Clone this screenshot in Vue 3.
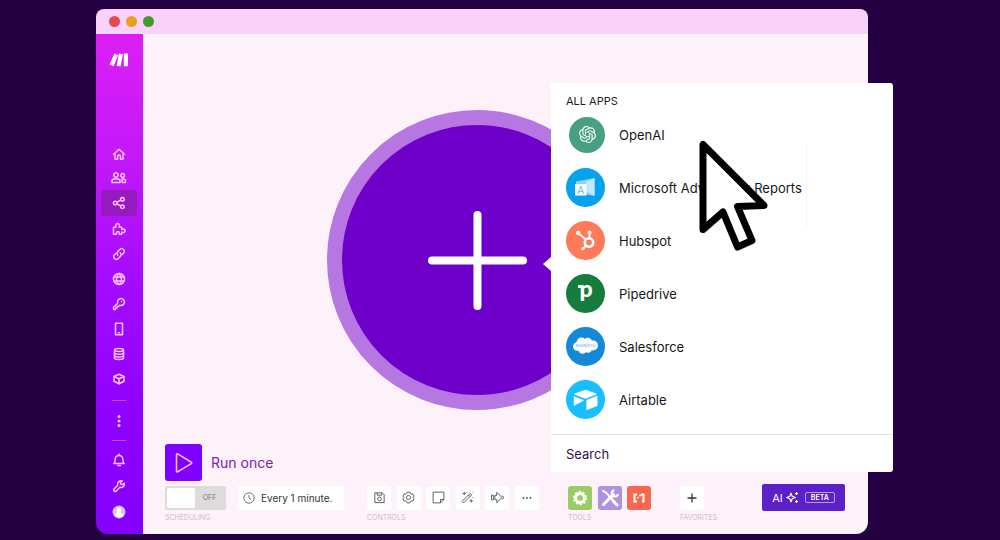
<script setup>
import { ref } from 'vue'

const navItems = [
  { name: 'Home', size: 'short', paths: ['M1.5 7.2 7 2.2l5.5 5', 'M3 6.2v6h2.6V9.3a1.4 1.4 0 0 1 2.8 0v2.9H11v-6'] },
  { name: 'Team', size: 'short', wide: true, paths: ['M5 1.8a2.2 2.2 0 1 1 0 4.4 2.2 2.2 0 0 1 0-4.4', 'M1 11.5V10a2 2 0 0 1 2-2h4a2 2 0 0 1 2 2v1.5Z', 'M11.6 2.6a1.8 1.8 0 1 1 0 3.6 1.8 1.8 0 0 1 0-3.6', 'M11 8h1.500a2 2 0 0 1 2 2v1.5h-3.2Z'] },
  { name: 'Scenarios', size: 'active', paths: ['M3.2 5.2a1.8 1.8 0 1 1 0 3.6 1.8 1.8 0 0 1 0-3.6', 'M10.4 1.4a1.8 1.8 0 1 1 0 3.6 1.8 1.8 0 0 1 0-3.6', 'M10.4 9a1.8 1.8 0 1 1 0 3.6 1.8 1.8 0 0 1 0-3.6', 'M5 6.2 8.7 4.2M5 7.9l3.7 2'] },
  { name: 'Templates', paths: ['M1.5 12.3V5.2h2.6c-1-2.4.2-3.7 1.5-3.7s2.5 1.3 1.5 3.7h2.6v2.3c2-.9 3.4-.1 3.4 1.3s-1.4 2.2-3.4 1.3v2.2H7.3v-1.4a1.4 1.4 0 0 0-2.8 0v1.4Z'] },
  { name: 'Connections', paths: ['M5.8 8.2a2.6 2.6 0 0 1 0-3.7l2-2a2.6 2.6 0 0 1 3.7 3.7L10 7.7', 'M8.2 5.8a2.6 2.6 0 0 1 0 3.7l-2 2a2.6 2.6 0 0 1-3.7-3.7L4 6.3'] },
  { name: 'Webhooks', paths: ['M7 1.5a5.5 5.5 0 1 1 0 11 5.5 5.5 0 0 1 0-11', 'M7 1.5c-3.3 3-3.3 8 0 11 3.3-3 3.3-8 0-11', 'M2 5h10M2 9h10'] },
  { name: 'Keys', paths: ['M9 1.5a3.5 3.5 0 1 1-1.2 6.8L6.3 9.6H5v1.5H3.6v1.4H1.5v-2.2l4.2-4.1A3.5 3.5 0 0 1 9 1.5Z', 'M9.5 4.5h.1'] },
  { name: 'Devices', paths: ['M3.5 1.2h7v11.6h-7Z', 'M6.3 10.8h1.4'] },
  { name: 'Data stores', paths: ['M2.5 3c0-2 9-2 9 0s-9 2-9 0v8c0 2 9 2 9 0V3', 'M2.5 5.7c0 2 9 2 9 0M2.5 8.4c0 2 9 2 9 0'] },
  { name: 'Data structures', paths: ['M7 2.3 12 4.500v4.800l-5 2.400-5-2.400V4.500Z', 'M2 4.500l5 2.200 5-2.200M7 6.700v5'] }
]

const lowerItems = [
  { name: 'Notifications', paths: ['M1.8 10.5c1.3-1 1.4-2.3 1.4-4.2a3.8 3.8 0 0 1 7.6 0c0 1.9.1 3.2 1.4 4.2Z', 'M5.7 12.6h2.6M7 1v1.2'] },
  { name: 'Settings', paths: ['M12.3 4.2 10.2 5.6 8.6 5l-.2-1.7L10.3 2a3.4 3.4 0 0 0-4.5 4.3L1.9 10.1a1.5 1.5 0 0 0 2.1 2.1l3.9-3.9a3.4 3.4 0 0 0 4.4-4.1Z'] }
]

const controls = [
  { name: 'Save', paths: ['M2 2h8l2 2v8.5H2Z', 'M4.5 2v2.5h5V2', 'M7 6.5a2 2 0 1 1 0 4 2 2 0 0 1 0-4'] },
  { name: 'Scenario settings', paths: ['M5.6 1.2h2.8l.4 1.5 1.5.8 1.5-.4L13 5.4 12 7l1 1.600-1.200 2.300-1.500-.4-1.500.8-.4 1.500H5.600l-.4-1.500-1.500-.8-1.500.4L1 8.600 2 7 1 5.400l1.200-2.300 1.500.4 1.500-.8Z', 'M7 4.8a2.2 2.2 0 1 1 0 4.4 2.2 2.2 0 0 1 0-4.4'] },
  { name: 'Notes', paths: ['M1.2 1.2h11.6v8l-3.600 3.600H1.200Z', 'M12.800 9.200H9.200v3.600'] },
  { name: 'Auto-align', paths: ['M1.2 11.2 9.8 2.6l1.600 1.600-8.600 8.600Z', 'M8 4.400l1.600 1.600', 'M3.5 1v3.400M1.800 2.700h3.400M11 9v3.400M9.300 10.700h3.400M6.5 1v1M13 6.5v1M12.300.9l.8.800'] },
  { name: 'Explain flow', paths: ['M.6 4.500h2v5h-2ZM4.200 4.800h2V1.500L12 7l-5.800 5.500V9.200h-2Z', 'M12 5.300c2 0 2 3.400 0 3.400'] },
  { name: 'More', dots: true }
]

const apps = [
  { id: 'openai', label: 'OpenAI' },
  { id: 'microsoft', label: 'Microsoft Advertising Reports' },
  { id: 'hubspot', label: 'Hubspot' },
  { id: 'pipedrive', label: 'Pipedrive' },
  { id: 'salesforce', label: 'Salesforce' },
  { id: 'airtable', label: 'Airtable' }
]

const scheduled = ref(false)
const query = ref('')
</script>

<template>
  <div class="desk">
    <div class="window">
      <header class="titlebar">
        <button class="light red" aria-label="Close"></button>
        <button class="light amber" aria-label="Minimize"></button>
        <button class="light green" aria-label="Maximize"></button>
      </header>

      <div class="body">
        <nav class="sidebar" aria-label="Main">
          <a class="logo" href="#" aria-label="Make">
            <svg width="20" height="14" viewBox="0 0 20 14" fill="#fff">
              <path d="M5.4.6 9.200 2.200 4.500 13.200.6 11.600ZM9.900.500l4 .7-2.300 12.200-4-.7ZM14.800.600H19v12.600h-4.200Z" />
            </svg>
          </a>
          <a v-for="item in navItems" :key="item.name" href="#" class="nav-item" :class="item.size" :aria-label="item.name">
            <svg :width="item.wide ? 16 : 14" height="14" :viewBox="item.wide ? '0 0 16 14' : '0 0 14 14'">
              <path v-for="d in item.paths" :key="d" :d="d" />
            </svg>
          </a>
          <hr />
          <a href="#" class="nav-item more" aria-label="More">
            <svg class="dots" width="4" height="14" viewBox="0 0 4 14">
              <circle cx="2" cy="2.5" r="1.5" /><circle cx="2" cy="7" r="1.5" /><circle cx="2" cy="11.5" r="1.5" />
            </svg>
          </a>
          <hr />
          <div class="lower">
            <a v-for="item in lowerItems" :key="item.name" href="#" class="nav-item tall" :aria-label="item.name">
              <svg width="14" height="14" viewBox="0 0 14 14">
                <path v-for="d in item.paths" :key="d" :d="d" />
              </svg>
            </a>
            <a href="#" class="nav-item tall" aria-label="Profile">
              <svg class="avatar" width="14" height="14" viewBox="0 0 14 14">
                <circle cx="7" cy="7" r="6.500" fill="#d9c3f3" />
                <path d="M7 2.500c1.800 0 2.400 1.400 2.200 3-.1 1-.5 1.600-.8 2 1.600.5 2.600 1.300 2.700 3.200a5.500 5.500 0 0 1-8.200 0c.1-1.900 1.100-2.700 2.700-3.200-.3-.4-.7-1-.8-2-.2-1.600.4-3 2.200-3Z" fill="#fffdf2" />
              </svg>
            </a>
          </div>
        </nav>

        <main class="canvas">
          <button class="add-node" aria-label="Add module">
            <svg width="100" height="100" viewBox="0 0 100 100">
              <path d="M50.500 5v91M5 50.500h91" stroke="#fff" stroke-width="8" stroke-linecap="round" />
            </svg>
          </button>

          <footer class="dock">
            <button class="run">
              <span class="run-icon">
                <svg width="20" height="22" viewBox="0 0 20 22">
                  <path d="M2.500 2.500v16.600a.8.800 0 0 0 1.200.7l13.600-8.200a.8.800 0 0 0 0-1.400L3.700 1.900a.8.800 0 0 0-1.200.6Z" />
                </svg>
              </span>
              <span>Run once</span>
            </button>

            <div class="toolbar">
              <section class="group">
                <div class="row schedule">
                  <label class="switch">
                    <input v-model="scheduled" type="checkbox" aria-label="Scheduling" />
                    <span class="thumb"></span>
                    <span class="state">{{ scheduled ? 'ON' : 'OFF' }}</span>
                  </label>
                  <button class="interval">
                    <svg width="12" height="12" viewBox="0 0 12 12">
                      <path d="M6 .8a5.200 5.200 0 1 1 0 10.400A5.200 5.200 0 0 1 6 .8M6 3v3.200l2 1" />
                    </svg>
                    Every 1 minute.
                  </button>
                </div>
                <span class="caption">SCHEDULING</span>
              </section>

              <section class="group controls">
                <div class="row">
                  <button v-for="c in controls" :key="c.name" class="tile" :aria-label="c.name">
                    <svg v-if="c.dots" width="12" height="12" viewBox="0 0 12 12" class="ellipsis">
                      <circle cx="2.500" cy="6" r="0.900" /><circle cx="6" cy="6" r="0.900" /><circle cx="9.500" cy="6" r="0.900" />
                    </svg>
                    <svg v-else width="13" height="13" viewBox="0 0 14 14">
                      <path v-for="d in c.paths" :key="d" :d="d" />
                    </svg>
                  </button>
                </div>
                <span class="caption">CONTROLS</span>
              </section>

              <section class="group tools">
                <div class="row">
                  <button class="tile lime" aria-label="Flow control">
                    <svg width="16" height="16" viewBox="0 0 16 16">
                      <circle cx="8" cy="8" r="4.500" fill="none" stroke="#fff" stroke-width="3" />
                      <circle cx="8" cy="8" r="6.400" fill="none" stroke="#fff" stroke-width="1.600" stroke-dasharray="2 2.020" />
                    </svg>
                  </button>
                  <button class="tile lilac" aria-label="Tools">
                    <svg width="20" height="20" viewBox="0 0 20 20" fill="none" stroke="#fff">
                      <path d="M3 3l3 1.500L15.500 15l2 2" stroke-width="2" stroke-linecap="round" />
                      <path d="M13 13l4 4M3.500 16.500 13.500 6.500" stroke-width="3" stroke-linecap="round" />
                      <path d="M14.500 2.200a3.200 3.200 0 1 0 3.500 3.600" stroke-width="2" />
                      <path d="M7.500 10.500h5M8 8.500h4" stroke-width="1" />
                    </svg>
                  </button>
                  <button class="tile coral" aria-label="Text parser">
                    <svg width="14" height="12" viewBox="0 0 14 12" fill="none" stroke="#fff" stroke-width="2">
                      <path d="M5 2.500H2.500v7H5M9 2.500h2.500v7H10" />
                      <path d="M6 6.500V5M8 4.500V2.500" stroke-width="1.500" />
                    </svg>
                  </button>
                </div>
                <span class="caption">TOOLS</span>
              </section>

              <section class="group">
                <div class="row">
                  <button class="tile" aria-label="Add favorite">
                    <svg width="10" height="10" viewBox="0 0 10 10" class="plus"><path d="M5 .5v9M.5 5h9" /></svg>
                  </button>
                </div>
                <span class="caption">FAVORITES</span>
              </section>

              <button class="ai">
                <span>AI</span>
                <svg width="13" height="13" viewBox="0 0 13 13">
                  <path d="M5 2.200 6.200 5.300 9.300 6.500 6.200 7.700 5 10.800 3.800 7.700.7 6.500 3.800 5.300Z" fill="none" stroke="#fff" stroke-width="1.200" stroke-linejoin="round" />
                  <path d="M10.500 1v3M9 2.500h3M10.500 9v3M9 10.500h3" stroke="#fff" stroke-width="1.200" />
                </svg>
                <span class="beta">BETA</span>
              </button>
            </div>
          </footer>
        </main>
      </div>

      <aside class="picker">
        <h2>ALL APPS</h2>
        <ul>
          <li v-for="app in apps" :key="app.id">
            <button class="app">
              <span class="slot">
                <span class="badge" :class="app.id">
                  <svg v-if="app.id === 'openai'" width="17" height="17" viewBox="0 0 24 24" fill="#fff">
                    <path d="M22.2819 9.8211a5.9847 5.9847 0 0 0-.5157-4.9108 6.0462 6.0462 0 0 0-6.5098-2.9A6.0651 6.0651 0 0 0 4.9807 4.1818a5.9847 5.9847 0 0 0-3.9977 2.9 6.0462 6.0462 0 0 0 .7427 7.0966 5.98 5.98 0 0 0 .511 4.9107 6.051 6.051 0 0 0 6.5146 2.9001A5.9847 5.9847 0 0 0 13.2599 24a6.0557 6.0557 0 0 0 5.7718-4.2058 5.9894 5.9894 0 0 0 3.9977-2.9001 6.0557 6.0557 0 0 0-.7475-7.0729zm-9.022 12.6081a4.4755 4.4755 0 0 1-2.8764-1.0408l.1419-.0804 4.7783-2.7582a.7948.7948 0 0 0 .3927-.6813v-6.7369l2.02 1.1686a.071.071 0 0 1 .038.052v5.5826a4.504 4.504 0 0 1-4.4945 4.4944zm-9.6607-4.1254a4.4708 4.4708 0 0 1-.5346-3.0137l.142.0852 4.783 2.7582a.7712.7712 0 0 0 .7806 0l5.8428-3.3685v2.3324a.0804.0804 0 0 1-.0332.0615L9.74 19.9502a4.4992 4.4992 0 0 1-6.1408-1.6464zM2.3408 7.8956a4.485 4.485 0 0 1 2.3655-1.9728V11.6a.7664.7664 0 0 0 .3879.6765l5.8144 3.3543-2.0201 1.1685a.0757.0757 0 0 1-.071 0l-4.8303-2.7865A4.504 4.504 0 0 1 2.3408 7.872zm16.5963 3.8558L13.1038 8.364 15.1192 7.2a.0757.0757 0 0 1 .071 0l4.8303 2.7913a4.4944 4.4944 0 0 1-.6765 8.1042v-5.6772a.79.79 0 0 0-.407-.667zm2.0107-3.0231l-.142-.0852-4.7735-2.7818a.7759.7759 0 0 0-.7854 0L9.409 9.2297V6.8974a.0662.0662 0 0 1 .0284-.0615l4.8303-2.7866a4.4992 4.4992 0 0 1 6.6802 4.66zM8.3065 12.863l-2.02-1.1638a.0804.0804 0 0 1-.038-.0567V6.0742a4.4992 4.4992 0 0 1 7.3757-3.4537l-.142.0805L8.704 5.459a.7948.7948 0 0 0-.3927.6813zm1.0976-2.3654l2.602-1.4998 2.6069 1.4998v2.9994l-2.5974 1.4997-2.6067-1.4997Z" />
                  </svg>
                  <svg v-else-if="app.id === 'microsoft'" width="39" height="39" viewBox="0 0 39 39">
                    <path d="M10 13.500 28.500 10v18L10 24.500Z" fill="#8fd2fb" />
                    <path d="M20 14 28.500 10v18L20 23Z" fill="#c4e7fd" />
                    <rect x="9" y="16" width="11.500" height="11.500" fill="#fff" />
                    <text x="14.700" y="25.500" text-anchor="middle" font-size="10" fill="#5cb8ee">A</text>
                  </svg>
                  <svg v-else-if="app.id === 'hubspot'" width="39" height="39" viewBox="0 0 39 39" fill="none" stroke="#fff">
                    <circle cx="23" cy="21.500" r="4.200" stroke-width="2.600" />
                    <path d="M23.500 17v-5M19.700 18.500l-7-6M20 24.700l-2.800 2.800" stroke-width="1.800" />
                    <g fill="#fff" stroke="none"><circle cx="23.500" cy="11.700" r="2" /><circle cx="12.200" cy="12" r="2.200" /><circle cx="17" cy="27.600" r="1.700" /></g>
                  </svg>
                  <svg v-else-if="app.id === 'pipedrive'" width="39" height="39" viewBox="0 0 39 39" fill="#fff">
                    <text class="heavy" x="20" y="23" text-anchor="middle" font-size="23">p</text>
                    <rect x="12" y="11" width="4" height="3" />
                  </svg>
                  <svg v-else-if="app.id === 'salesforce'" width="39" height="39" viewBox="0 0 39 39" fill="#fff">
                    <circle cx="15.500" cy="15.500" r="5" /><circle cx="21.800" cy="15" r="4.200" /><circle cx="27" cy="18.500" r="5" />
                    <circle cx="11.200" cy="19.500" r="4.200" /><circle cx="16.500" cy="22.500" r="4.200" /><circle cx="22" cy="21.500" r="4.200" />
                    <text x="19.500" y="20" text-anchor="middle" font-size="4" font-style="italic" fill="#5aa9e0">salesforce</text>
                  </svg>
                  <svg v-else width="39" height="39" viewBox="0 0 39 39" fill="#fff">
                    <path d="M18.800 9.900a2 2 0 0 1 1.500 0l10 3.700c.5.200.5.800 0 1l-10 3.800a2.400 2.400 0 0 1-1.700 0l-10-3.800c-.5-.2-.5-.8 0-1Z" />
                    <path d="M20.500 20.100 30.700 16.100c.4-.1.800.1.800.5v8.900c0 .3-.2.500-.4.600L21 30c-.4.100-.7-.1-.7-.5Z" />
                    <path d="M7.800 16.900c0-.5.300-.7.700-.5l9 3.600c.4.200.4.600 0 .8l-9 4.800c-.4.200-.7 0-.7-.4Z" />
                  </svg>
                </span>
              </span>
              <span>{{ app.label }}</span>
            </button>
          </li>
        </ul>
        <input v-model="query" class="search" type="text" placeholder="Search" aria-label="Search" />
        <svg class="pointer" width="110" height="112" viewBox="0 0 110 112">
          <path d="M109.500 4v84" stroke="#f3f3f3" stroke-width="1" />
          <path d="M6 5.500v85l20-17.500 14.500 35 14.500-6.500L40.500 67.500 67 66.500Z" fill="#fff" stroke="#000" stroke-width="7" stroke-linejoin="round" />
        </svg>
      </aside>
    </div>
  </div>
</template>

<style>
body {
  margin: 0;
  background: #240042;
}
</style>

<style scoped>
* {
  box-sizing: border-box;
}

button {
  margin: 0;
  padding: 0;
  border: 0;
  background: none;
  font: inherit;
  color: inherit;
  cursor: pointer;
}

svg {
  display: block;
  flex: none;
  overflow: visible;
}

.desk {
  display: flex;
  min-height: 100vh;
  padding: 9px 132px 6px 96px;
  background: #240042;
  font-family: Inter, "Liberation Sans", sans-serif;
}

.window {
  position: relative;
  display: flex;
  flex: 1;
  flex-direction: column;
}

.titlebar {
  display: flex;
  align-items: center;
  gap: 6px;
  height: 25px;
  padding: 0 13px;
  border-radius: 8px 8px 0 0;
  background: #f9d2fb;
}

.light {
  width: 11px;
  height: 11px;
  border-radius: 50%;
}

.red { background: #e5494d; }
.amber { background: #eb9f1c; }
.green { background: #46982f; }

.body {
  display: flex;
  flex: 1;
}

.sidebar {
  display: flex;
  flex-direction: column;
  align-items: center;
  width: 47px;
  padding: 0 2px 9px 0;
  border-radius: 0 0 0 12px;
  background: linear-gradient(#dc1ff6, #c318f8 25%, #a40bff 50%, #8f02ff 75%, #8400ff);
}

.logo {
  margin: 19px 0 75px;
}

.nav-item {
  display: flex;
  align-items: center;
  justify-content: center;
  width: 36px;
  height: 25px;
}

.nav-item svg {
  fill: none;
  stroke: #ffc4ff;
  stroke-width: 1.5;
  stroke-linejoin: round;
  stroke-linecap: round;
}

.short { height: 24px; }

.active {
  height: 26px;
  border-radius: 4px;
  background: #951abf;
}

.more { height: 39px; }
.tall { height: 26px; }

.nav-item .dots {
  fill: #ffc4ff;
  stroke: none;
}

.nav-item .avatar {
  stroke: none;
}

.sidebar hr {
  width: 14px;
  height: 1px;
  margin: 0;
  border: 0;
  background: #b84dff;
}

.nav-item + hr { margin-top: 9px; }
.more + hr { margin-top: 0; }

.lower { margin-top: 6px; }

.canvas {
  position: relative;
  display: flex;
  flex: 1;
  flex-direction: column;
  justify-content: flex-end;
  border-radius: 0 0 12px 0;
  background: #fdf1fa;
}

.add-node {
  position: absolute;
  top: 76px;
  left: 184px;
  display: grid;
  place-items: center;
  width: 300px;
  height: 300px;
  border: 15px solid #b677e2;
  border-radius: 50%;
  background: #6e00c9;
}

.dock {
  padding: 0 23px 12px 22px;
}

.run {
  display: flex;
  align-items: center;
  gap: 9px;
  margin-bottom: 3px;
  color: #7a22bb;
  font-size: 14px;
}

.run-icon {
  display: grid;
  place-items: center;
  width: 37px;
  height: 37px;
  border-radius: 3px;
  background: #7f00ff;
}

.run-icon path {
  fill: none;
  stroke: #f6b8ff;
  stroke-width: 1.6;
}

.toolbar {
  display: flex;
  align-items: flex-start;
  gap: 29px;
}

.group {
  display: flex;
  flex-direction: column;
  gap: 3px;
}

.group:first-child { margin-right: -6px; }

.row {
  display: flex;
  align-items: center;
  justify-content: space-between;
  height: 27px;
}

.schedule {
  justify-content: flex-start;
  gap: 12px;
}

.controls { width: 172px; }
.tools { width: 83px; }

.caption {
  color: #bdb2bc;
  font-size: 7px;
  font-weight: 300;
  line-height: 8px;
}

.switch {
  display: flex;
  align-items: center;
  width: 61px;
  height: 24px;
  padding: 2px;
  border-radius: 2px;
  background: #dedbdd;
  cursor: pointer;
}

.switch input {
  position: absolute;
  opacity: 0;
}

.thumb {
  width: 28px;
  height: 20px;
  border-radius: 2px;
  background: #fff;
}

.state {
  flex: 1;
  color: #77747a;
  font-size: 7px;
  text-align: center;
}

.switch:has(input:checked) { flex-direction: row-reverse; }

.interval {
  display: flex;
  align-items: center;
  gap: 6px;
  width: 106px;
  height: 24px;
  padding-left: 5px;
  border-radius: 2px;
  background: #fff;
  color: #333;
  font-size: 10px;
  white-space: nowrap;
}

.interval path {
  fill: none;
  stroke: #777;
}

.tile {
  display: grid;
  place-items: center;
  width: 24px;
  height: 24px;
  border-radius: 3px;
  background: #fff;
}

.controls .tile svg {
  fill: none;
  stroke: #555;
  stroke-width: 1;
}

.controls .tile .ellipsis {
  fill: #555;
  stroke: none;
}

.plus {
  stroke: #333;
  stroke-width: 1.3;
}

.lime { background: #9bcb64; }
.lilac { background: #af90e1; }
.coral { background: #fb6650; }

.ai {
  display: flex;
  align-items: center;
  justify-content: center;
  gap: 3px;
  width: 83px;
  height: 27px;
  margin-left: auto;
  border-radius: 2px;
  background: #5b20c8;
  color: #fff;
  font-size: 11px;
}

.beta {
  margin-left: 3px;
  padding: 0 5px;
  border: 1px solid #b79aec;
  border-radius: 2px;
  font-size: 7px;
  font-weight: 600;
  line-height: 9px;
}

.picker {
  position: absolute;
  top: 74px;
  left: 455px;
  display: flex;
  flex-direction: column;
  width: 342px;
  border-radius: 3px;
  background: #fff;
  color: #161616;
}

.picker::before {
  content: "";
  position: absolute;
  top: 174px;
  left: -8px;
  border: 7px solid transparent;
  border-right: 8px solid #fff;
  border-left: 0;
}

.picker h2 {
  margin: 12px 0 0 15px;
  color: #222;
  font-size: 11px;
  font-weight: 400;
  line-height: 13px;
}

.picker ul {
  margin: 0 0 8px;
  padding: 0;
  list-style: none;
}

.app {
  display: flex;
  align-items: center;
  gap: 14px;
  width: 100%;
  height: 53px;
  padding: 0 15px;
  font-size: 13px;
  text-align: left;
}

.slot {
  display: flex;
  justify-content: flex-end;
  width: 39px;
}

.badge {
  display: grid;
  place-items: center;
  width: 39px;
  height: 39px;
  border-radius: 50%;
}

.openai {
  width: 36px;
  height: 36px;
  background: #47a07f;
}

.microsoft { background: #05a2ed; }
.hubspot { background: #ff7a59; }
.pipedrive { background: #157c3d; }
.salesforce { background: #1489d8; }
.airtable { background: #18bfff; }

.heavy {
  font-family: Lato, sans-serif;
  font-weight: 900;
}

.search {
  height: 38px;
  padding: 0 15px;
  border: 0;
  border-top: 1px solid #e2e2e4;
  border-radius: 0 0 3px 3px;
  outline: 0;
  background: transparent;
  color: #34104f;
  font: 13px Inter, "Liberation Sans", sans-serif;
}

.search::placeholder {
  color: #34104f;
  opacity: 1;
}

.pointer {
  position: absolute;
  top: 56px;
  left: 146px;
  pointer-events: none;
}
</style>
